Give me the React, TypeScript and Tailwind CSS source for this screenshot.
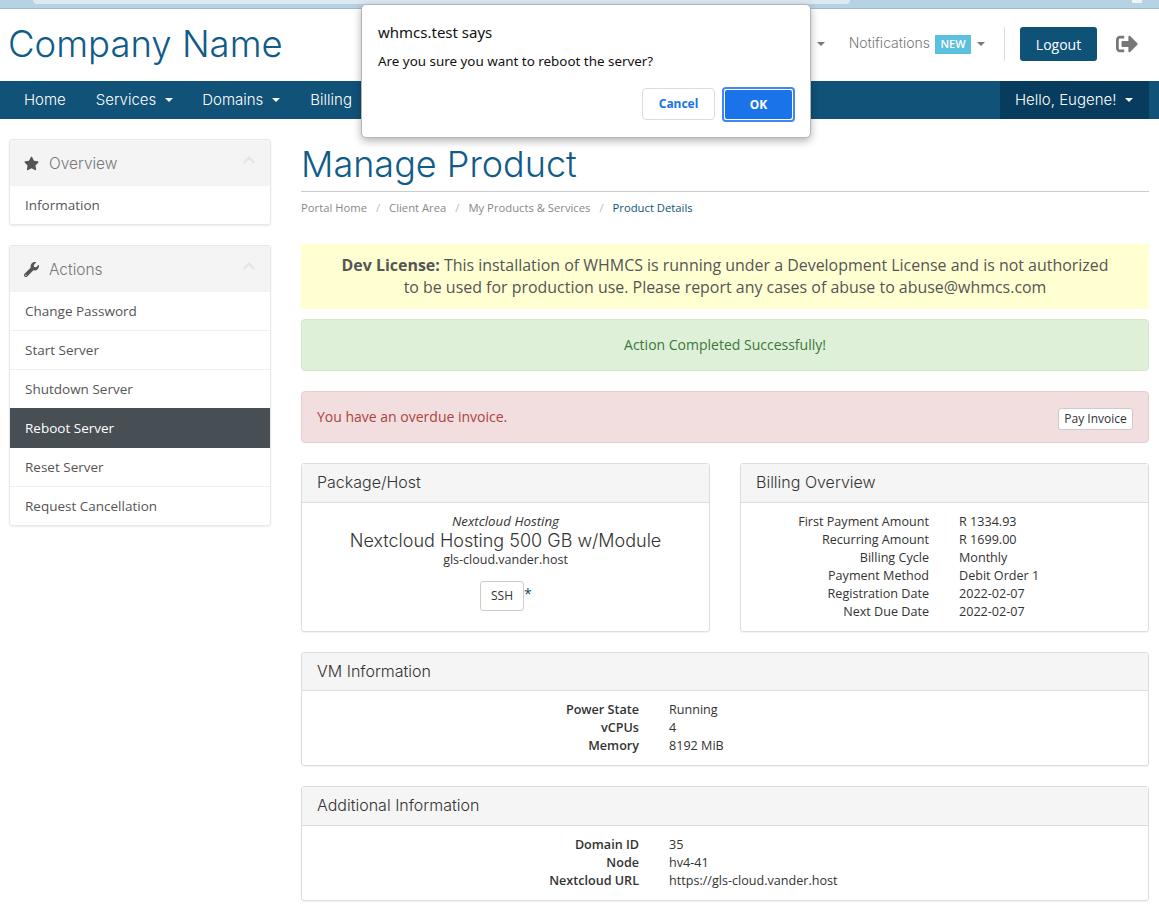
import React from "react";
import { FaStar, FaWrench, FaSignOutAlt, FaChevronUp } from "react-icons/fa";

const os = "font-['Open_Sans',sans-serif]";

function Caret({ className = "" }: { className?: string }) {
  return <span className={`inline-block w-0 h-0 border-x-[4px] border-x-transparent border-t-[4px] ${className}`} />;
}

function SideHead({ icon, title }: { icon: React.ReactNode; title: string }) {
  return (
    <div className="h-[46px] bg-[#f4f4f4] flex items-center pl-[14px] pr-[14px] text-[#666]">
      <span className="w-[18px] text-[#555] flex">{icon}</span>
      <span className="ml-[7px] mt-[2px] text-[15.5px] font-['Inter',sans-serif] font-light text-[#777]">{title}</span>
      <FaChevronUp className="ml-auto text-[#e4e4e4] -mt-[6px]" size={14} />
    </div>
  );
}

function SideItem({ label, active, last }: { label: string; active?: boolean; last?: boolean }) {
  const h = active ? "h-[40px] -mt-px bg-[#484f54] text-white" : last ? "h-[38px] text-[#555]" : "h-[39px] border-b border-[#f0f0f0] text-[#555]";
  return <div className={`flex items-center pl-[15px] text-[13.5px] ${h}`}>{label}</div>;
}

function Panel({ title, className, head, children }: { title: string; className?: string; head: string; children: React.ReactNode }) {
  return (
    <div className={`border border-[#ddd] rounded-[3px] shadow-[0_1px_1px_rgba(0,0,0,0.05)] ${className ?? ""}`}>
      <div className={`${head} bg-[#f5f5f5] border-b border-[#ddd] flex items-center pl-[15px] pb-[2px] text-[16px] text-[#333] font-['Inter',sans-serif] font-light`}>{title}</div>
      {children}
    </div>
  );
}

function Rows({ rows, left, bold, top }: { rows: [string, string][]; left: string; bold?: boolean; top: string }) {
  return (
    <div className={`${top} text-[12.6px] leading-[18px] text-[#333]`}>
      {rows.map(([k, v]) => (
        <div key={k} className="flex">
          <div className={`${left} text-right shrink-0 ${bold ? "font-semibold" : ""}`}>{k}</div>
          <div className="ml-[30px]">{v}</div>
        </div>
      ))}
    </div>
  );
}

export default function App() {
  return (
    <div className={`relative w-[1159px] h-[912px] overflow-hidden bg-white ${os}`}>
      <div className="h-[9px] bg-[#b6d2e3] border-b border-[#9dbbcf] relative">
        <div className="absolute left-[33px] top-0 w-[817px] h-[4px] bg-[#dce9f3] rounded-b-[6px]" />
        <div className="absolute left-[1132px] top-0 w-[10px] h-[3px] bg-[#eef4f8]" />
      </div>

      <div className="h-[72px] flex items-center pl-[8px] pr-[21px]">
        <div className="text-[36.5px] text-[#0f5c8a] font-['Inter',sans-serif] font-light -mt-[2px]">Company Name</div>
        <div className="ml-auto flex items-center text-[#777] text-[14px] -mt-[2px]">
          <Caret className="border-t-[#777] mr-[24px]" />
          <span className="font-['Inter',sans-serif] font-light -mt-[3px] mr-[1px]">Notifications</span>
          <span className="ml-[4px] bg-[#5bc0de] text-white text-[11px] font-semibold w-[36px] h-[19px] flex items-center justify-center">NEW</span>
          <Caret className="border-t-[#777] ml-[6px]" />
          <div className="w-px h-[34px] bg-[#ddd] ml-[19px]" />
          <button className="ml-[15px] w-[77px] h-[34px] rounded-[3px] bg-[#0f5278] text-white text-[14px]">Logout</button>
          <FaSignOutAlt className="ml-[19px] text-[#777]" size={22} />
        </div>
      </div>

      <div className="h-[38px] bg-[#115279] flex items-center pl-[9px] pr-[10px] text-white font-['Inter',sans-serif] font-light text-[15px]">
        <span className="px-[15px]">Home</span>
        <span className="px-[15px] flex items-center">Services<Caret className="border-t-white ml-[9px]" /></span>
        <span className="pl-[14px] pr-[15px] flex items-center">Domains<Caret className="border-t-white ml-[9px]" /></span>
        <span className="px-[15px]">Billing</span>
        <div className="ml-auto h-full bg-[#073c5e] w-[149px] flex items-center pl-[15px]">Hello, Eugene!<Caret className="border-t-white ml-[9px]" /></div>
      </div>

      <div className="flex pl-[9px] pr-[10px] pt-[20px]">
        <aside className="w-[262px] shrink-0">
          <div className="border border-[#e8e8e8] rounded-[3px] shadow-[0_1px_2px_rgba(0,0,0,0.08)] overflow-hidden">
            <SideHead icon={<FaStar size={15} />} title="Overview" />
            <SideItem label="Information" last />
          </div>
          <div className="mt-[20px] border border-[#e8e8e8] rounded-[3px] shadow-[0_1px_2px_rgba(0,0,0,0.08)] overflow-hidden">
            <SideHead icon={<FaWrench size={15} />} title="Actions" />
            <SideItem label="Change Password" />
            <SideItem label="Start Server" />
            <SideItem label="Shutdown Server" />
            <SideItem label="Reboot Server" active />
            <SideItem label="Reset Server" />
            <SideItem label="Request Cancellation" last />
          </div>
        </aside>

        <main className="ml-[30px] w-[848px]">
          <h1 className="h-[53px] text-[36px] leading-[50px] text-[#0f5c8a] border-b border-[#ccc] font-['Inter',sans-serif] font-light">Manage Product</h1>
          <div className="h-[33px] flex items-center text-[11.25px] text-[#888]">
            <span>Portal Home</span><span className="mx-[9px] text-[#bbb]">/</span>
            <span>Client Area</span><span className="mx-[9px] text-[#bbb]">/</span>
            <span>My Products &amp; Services</span><span className="mx-[9px] text-[#bbb]">/</span>
            <span className="text-[#0f5278]">Product Details</span>
          </div>
          <div className="mt-[19px] h-[65px] bg-[#ffffd2] flex items-center justify-center text-center text-[15.95px] leading-[22px] text-[#555] px-[30px] pb-[2px]">
            <div><b className="font-bold">Dev License:</b> This installation of WHMCS is running under a Development License and is not authorized<br />to be used for production use. Please report any cases of abuse to abuse@whmcs.com</div>
          </div>
          <div className="mt-[10px] h-[52px] bg-[#dff0d8] border border-[#d6e9c6] rounded-[4px] text-[#3c763d] text-[14px] flex items-center justify-center pb-[2px]">Action Completed Successfully!</div>
          <div className="mt-[20px] h-[52px] bg-[#f2dede] border border-[#ebccd1] rounded-[4px] text-[#a94442] text-[14px] flex items-center pl-[15px] pr-[15px]">
            <span className="-mt-[2px]">You have an overdue invoice.</span>
            <button className="ml-auto mt-[4px] h-[22px] w-[75px] bg-white border border-[#ccc] rounded-[3px] text-[12px] text-[#333]">Pay Invoice</button>
          </div>

          <div className="mt-[20px] flex gap-[30px]">
            <Panel title="Package/Host" head="h-[39px]" className="w-[409px] h-[169px]">
              <div className="text-center text-[#333] pt-[9px]">
                <div className="text-[13.3px] italic leading-[18px]">Nextcloud Hosting</div>
                <div className="mt-[1px] text-[18px] leading-[20px] font-['Inter',sans-serif] font-light">Nextcloud Hosting 500 GB w/Module</div>
                <div className="text-[12.5px] leading-[18px]">gls-cloud.vander.host</div>
                <div className="mt-[12px] flex justify-center pr-[7px]">
                  <div className="relative">
                    <button className="w-[44px] h-[30px] border border-[#ccc] rounded-[3px] text-[12px] bg-white">SSH</button>
                    <span className="absolute left-[44px] top-[2px] text-[#0f5278] text-[14px]">*</span>
                  </div>
                </div>
              </div>
            </Panel>
            <Panel title="Billing Overview" head="h-[39px]" className="w-[409px] h-[169px]">
              <Rows top="pt-[10px]" left="w-[188px]" rows={[["First Payment Amount","R 1334.93"],["Recurring Amount","R 1699.00"],["Billing Cycle","Monthly"],["Payment Method","Debit Order 1"],["Registration Date","2022-02-07"],["Next Due Date","2022-02-07"]]} />
            </Panel>
          </div>

          <Panel title="VM Information" head="h-[38px]" className="mt-[20px] h-[114px]">
            <Rows top="pt-[10px]" bold left="w-[337px]" rows={[["Power State","Running"],["vCPUs","4"],["Memory","8192 MiB"]]} />
          </Panel>
          <Panel title="Additional Information" head="h-[39px]" className="mt-[20px] h-[115px]">
            <Rows top="pt-[10px]" bold left="w-[337px]" rows={[["Domain ID","35"],["Node","hv4-41"],["Nextcloud URL","https://gls-cloud.vander.host"]]} />
          </Panel>
        </main>
      </div>

      <div className="absolute left-[361px] top-[4px] w-[450px] h-[134px] bg-white border border-[#b5b5b5] rounded-[5px] shadow-[0_3px_8px_rgba(0,0,0,0.3)] pl-[16px] pr-[15px] font-['Noto_Sans',sans-serif] text-[#111]">
        <div className="mt-[17px] text-[15px] leading-[20px]">whmcs.test says</div>
        <div className="mt-[9px] text-[13.4px] leading-[20px]">Are you sure you want to reboot the server?</div>
        <div className="mt-[17px] flex justify-end gap-[7px]">
          <button className="w-[73px] h-[32px] border border-[#dadce0] rounded-[4px] bg-white text-[#1a73e8] text-[12px] font-bold">Cancel</button>
          <div className="w-[73px] h-[35px] -mt-[1px] rounded-[4px] border-2 border-[#4285f4] p-px bg-white">
            <button className="w-full h-full rounded-[2px] bg-[#1a73e8] text-white text-[12px] font-bold">OK</button>
          </div>
        </div>
      </div>
    </div>
  );
}
